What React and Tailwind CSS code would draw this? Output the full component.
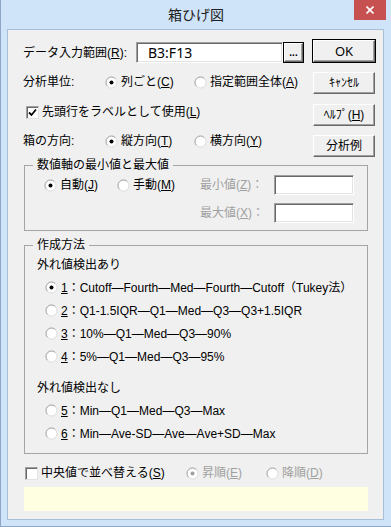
import React from 'react';

function RadioDot({ checked, disabled }) {
  return (
    <svg width="13" height="13" viewBox="0 0 13 13" className="shrink-0">
      <circle cx="6.5" cy="6.5" r="5.5" fill="#fff" />
      <path d="M2.6 10.4A5.5 5.5 0 0 1 10.4 2.6" fill="none" stroke="#9a9a9a" />
      <path d="M10.4 2.6A5.5 5.5 0 0 1 2.6 10.4" fill="none" stroke="#dcdcdc" />
      {checked && <circle cx="6.5" cy="6.5" r="2" fill={disabled ? '#a0a0a0' : '#000'} />}
    </svg>
  );
}

function Radio({ checked, disabled, className = '', children }) {
  return (
    <span className={`inline-flex items-center ${className}`}>
      <RadioDot checked={checked} disabled={disabled} />
      <span className={disabled ? 'ml-[3px] text-[#a0a0a0]' : 'ml-[3px]'}>{children}</span>
    </span>
  );
}

function Check({ checked }) {
  return (
    <span className="flex h-[13px] w-[13px] shrink-0 items-center justify-center border border-t-[#a0a0a0] border-l-[#a0a0a0] border-r-[#e3e3e3] border-b-[#e3e3e3] bg-white shadow-[inset_1px_1px_0_#696969]">
      {checked && (
        <svg width="9" height="9" viewBox="0 0 9 9">
          <path d="M1 4.5 L3.5 7 L8 1.5" fill="none" stroke="#000" strokeWidth="1.8" />
        </svg>
      )}
    </span>
  );
}

function Field({ className = '', children }) {
  return (
    <div className={`flex items-center border border-t-[#a0a0a0] border-l-[#a0a0a0] border-r-white border-b-white bg-white shadow-[inset_1px_1px_0_#696969,inset_-1px_-1px_0_#e3e3e3] ${className}`}>
      {children}
    </div>
  );
}

function Btn({ className = '', children }) {
  return (
    <div className={`flex items-center justify-center border border-t-white border-l-white border-r-[#696969] border-b-[#696969] bg-[#f0f0f0] shadow-[inset_-1px_-1px_0_#a0a0a0] ${className}`}>
      {children}
    </div>
  );
}

export default function App() {
  return (
    <div lang="ja" className="flex h-[527px] w-[391px] flex-col border-b border-l border-[#8ea7c4] bg-[#cfe4f8] text-[12px] leading-none text-black [font-family:'Liberation_Sans','Noto_Sans_CJK_JP',sans-serif]">
      {/* title bar */}
      <div className="grid h-[29px] shrink-0 grid-cols-[1fr_auto_1fr] items-start">
        <div />
        <div className="flex h-[29px] items-center text-[14px] text-[#202020]">箱ひげ図</div>
        <div className="mr-[5px] flex h-[20px] w-[32px] items-center justify-center justify-self-end bg-[#c75050]">
          <svg width="8" height="8" viewBox="0 0 8 8">
            <path d="M0.5 0.5 L7.5 7.5 M7.5 0.5 L0.5 7.5" stroke="#fff" strokeWidth="1.6" />
          </svg>
        </div>
      </div>

      {/* client area */}
      <div className="mb-[6px] ml-[6px] mr-[7px] flex flex-1 flex-col border border-[#a9bfd7] bg-[#f0f0f0]">
        <div className="flex h-[127px] shrink-0">
          <div className="flex flex-1 flex-col pl-[15px] pt-[12px]">
            <div className="flex h-[21px] items-center">
              <span className="w-[113px]">データ入力範囲(<u>R</u>):</span>
              <Field className="h-[21px] w-[147px] pl-[11px] text-[14px] [font-family:'Noto_Sans',sans-serif]">B3:F13</Field>
              <div className="h-[21px] w-[21px] border border-black">
                <Btn className="h-full w-full items-end pb-[3px] text-[10px] font-bold leading-none">...</Btn>
              </div>
            </div>
            <div className="mt-[9px] flex h-[20px] items-center">
              <span className="w-[82px]">分析単位:</span>
              <Radio checked className="w-[89px]">列ごと(<u>C</u>)</Radio>
              <Radio>指定範囲全体(<u>A</u>)</Radio>
            </div>
            <div className="mt-[10px] flex h-[20px] items-center pl-[3px]">
              <Check checked />
              <span className="ml-[3px]">先頭行をラベルとして使用(<u>L</u>)</span>
            </div>
            <div className="mt-[9px] flex h-[20px] items-center">
              <span className="w-[82px]">箱の方向:</span>
              <Radio checked className="w-[89px]">縦方向(<u>T</u>)</Radio>
              <Radio>横方向(<u>Y</u>)</Radio>
            </div>
          </div>
          <div className="mr-[7px] flex w-[64px] flex-col pt-[9px]">
            <div className="h-[24px] border border-black">
              <Btn className="h-full w-full text-[13px] [font-family:'Noto_Sans',sans-serif]">OK</Btn>
            </div>
            <Btn className="mx-[1px] mt-[9px] h-[22px]">ｷｬﾝｾﾙ</Btn>
            <Btn className="mx-[1px] mt-[10px] h-[22px]">ﾍﾙﾌﾟ(<u>H</u>)</Btn>
            <Btn className="mx-[1px] mt-[9px] h-[22px]">分析例</Btn>
          </div>
        </div>

        {/* axis range group */}
        <fieldset className="ml-[16px] mr-[15px] border border-[#a5a5a5] px-[8px] pb-[7px]">
          <legend className="px-[4px] leading-[16px]">数値軸の最小値と最大値</legend>
          <div className="mt-[2px] flex h-[20px] items-center">
            <Radio checked className="ml-[11px] w-[73px]">自動(<u>J</u>)</Radio>
            <Radio>手動(<u>M</u>)</Radio>
            <span className="ml-auto w-[74px] text-[#a0a0a0]">最小値(<u>Z</u>)：</span>
            <Field className="mr-[5px] h-[20px] w-[80px]" />
          </div>
          <div className="mt-[8px] flex h-[20px] items-center justify-end">
            <span className="w-[74px] text-[#a0a0a0]">最大値(<u>X</u>)：</span>
            <Field className="mr-[5px] h-[20px] w-[80px]" />
          </div>
        </fieldset>

        {/* method group */}
        <fieldset className="ml-[16px] mr-[15px] mt-[6px] border border-[#a5a5a5] px-[8px] pb-[8px]">
          <legend className="px-[4px] leading-[16px]">作成方法</legend>
          <div className="flex h-[23px] items-center pl-[4px]">外れ値検出あり</div>
          <div className="flex h-[23px] items-center pl-[12px]">
            <Radio checked><u>1</u>：Cutoff—Fourth—Med—Fourth—Cutoff（Tukey法）</Radio>
          </div>
          <div className="flex h-[23px] items-center pl-[12px]">
            <Radio><u>2</u>：Q1-1.5IQR—Q1—Med—Q3—Q3+1.5IQR</Radio>
          </div>
          <div className="flex h-[23px] items-center pl-[12px]">
            <Radio><u>3</u>：10%—Q1—Med—Q3—90%</Radio>
          </div>
          <div className="flex h-[23px] items-center pl-[12px]">
            <Radio><u>4</u>：5%—Q1—Med—Q3—95%</Radio>
          </div>
          <div className="mt-[8px] flex h-[23px] items-center pl-[4px]">外れ値検出なし</div>
          <div className="flex h-[23px] items-center pl-[12px]">
            <Radio><u>5</u>：Min—Q1—Med—Q3—Max</Radio>
          </div>
          <div className="flex h-[23px] items-center pl-[12px]">
            <Radio><u>6</u>：Min—Ave-SD—Ave—Ave+SD—Max</Radio>
          </div>
        </fieldset>

        <div className="ml-[17px] mt-[9px] flex h-[20px] items-center">
          <span className="flex w-[161px] items-center">
            <Check />
            <span className="ml-[3px]">中央値で並べ替える(<u>S</u>)</span>
          </span>
          <Radio checked disabled className="w-[80px]">昇順(<u>E</u>)</Radio>
          <Radio disabled>降順(<u>D</u>)</Radio>
        </div>

        <div className="ml-[16px] mr-[15px] mt-[4px] h-[24px] bg-[#ffffe1]" />
      </div>
    </div>
  );
}
